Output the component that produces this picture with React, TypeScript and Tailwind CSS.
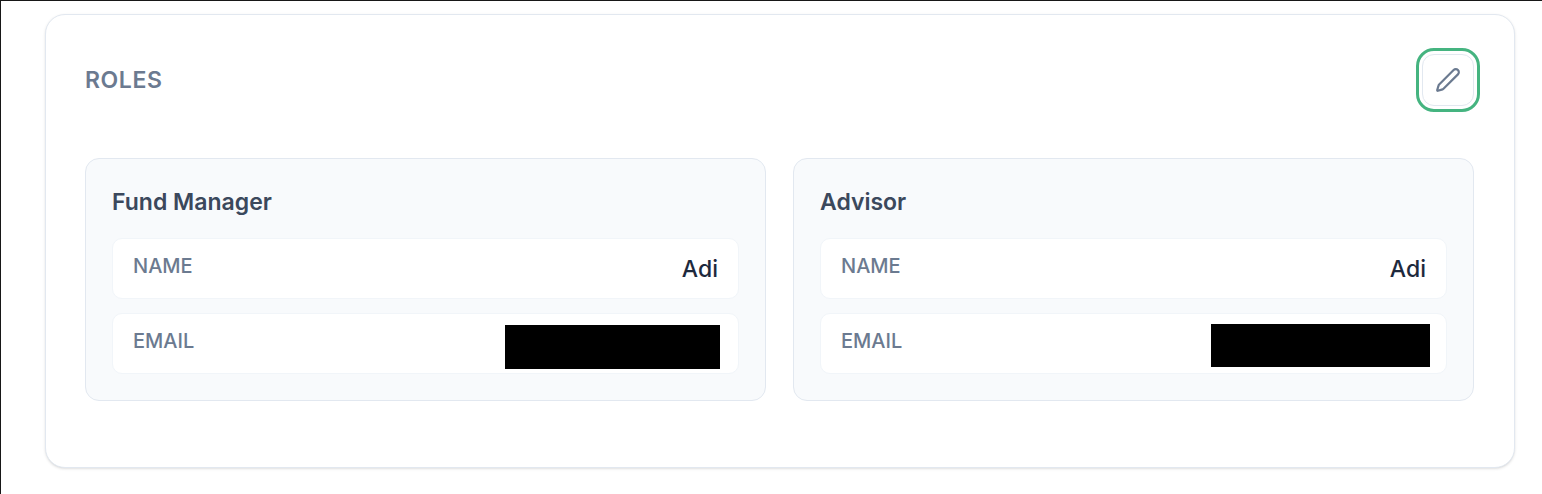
import React from "react";
import { clsx } from "clsx";

type Role = {
  title: string;
  name: string;
  redaction: string;
};

const roles: Role[] = [
  { title: "Fund Manager", name: "Adi", redaction: "right-[18px] top-[11px] h-11 w-[215px]" },
  { title: "Advisor", name: "Adi", redaction: "right-4 top-[10px] h-[43px] w-[219px]" },
];

const PencilIcon = () => (
  <svg
    className="size-[26px]"
    viewBox="0 0 24 24"
    fill="none"
    stroke="currentColor"
    strokeWidth={2}
    strokeLinecap="round"
    strokeLinejoin="round"
    aria-hidden="true"
  >
    <path d="M21.174 6.812a1 1 0 0 0-3.986-3.987L3.842 16.174a2 2 0 0 0-.5.83l-1.321 4.352a.5.5 0 0 0 .623.622l4.353-1.32a2 2 0 0 0 .83-.497z" />
  </svg>
);

const Field = ({ label, children }: { label: string; children: React.ReactNode }) => {
  return (
    <div className="relative flex min-h-[61px] items-start justify-between rounded-[10px] border border-slate-100 bg-white px-5 pt-[13px] pb-[11px]">
      <dt className="text-[20px] leading-7 font-medium text-[#6b7a90] uppercase">{label}</dt>
      {children}
    </div>
  );
};

const RoleCard = ({ role }: { role: Role }) => {
  return (
    <article className="min-w-0 flex-1 rounded-[14px] border border-slate-200 bg-slate-50 p-[26px]">
      <h3 className="mb-[18px] text-[23px] leading-[35px] font-semibold text-[#3b485c]">{role.title}</h3>
      <dl className="flex flex-col gap-[14px]">
        <Field label="Name">
          <dd className="text-[23px] leading-[35px] font-medium text-slate-800">{role.name}</dd>
        </Field>
        <Field label="Email">
          <dd className={clsx("absolute bg-black", role.redaction)} aria-label="Hidden email" />
        </Field>
      </dl>
    </article>
  );
};

const App = () => {
  return (
    <main className="min-h-screen border-t border-l border-neutral-900 bg-white pt-[13px] pr-[27px] pb-[26px] pl-11 font-['Inter',sans-serif]">
      <section className="rounded-[20px] border border-slate-200 bg-white pt-[39px] pr-10 pb-[66px] pl-[39px] shadow-sm">
        <header className="mb-[52px] flex items-center justify-between">
          <h2 className="text-[23px] leading-[35px] font-semibold tracking-wide text-[#6b7a90] uppercase">Roles</h2>
          <button
            type="button"
            aria-label="Edit roles"
            className="flex size-[52px] items-center justify-center rounded-[12px] border border-slate-200 bg-white text-[#6b7a90] outline-[3px] outline-offset-[3px] outline-[#45b480]"
          >
            <PencilIcon />
          </button>
        </header>
        <div className="flex gap-[27px]">
          {roles.map((role) => (
            <RoleCard key={role.title} role={role} />
          ))}
        </div>
      </section>
    </main>
  );
};

export default App;
